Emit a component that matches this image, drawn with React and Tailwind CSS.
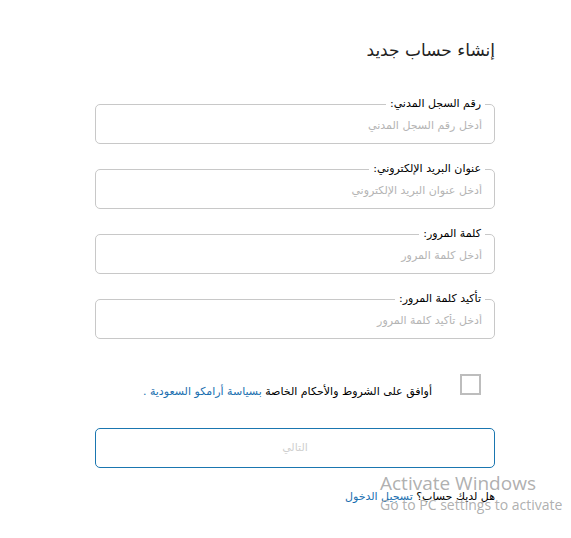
import React from "react";

const fields = [
  { label: "رقم السجل المدني:", placeholder: "أدخل رقم السجل المدني", type: "text" },
  { label: "عنوان البريد الإلكتروني:", placeholder: "أدخل عنوان البريد الإلكتروني", type: "email" },
  { label: "كلمة المرور:", placeholder: "أدخل كلمة المرور", type: "password" },
  { label: "تأكيد كلمة المرور:", placeholder: "أدخل تأكيد كلمة المرور", type: "password" },
];

const Field = ({ label, placeholder, type }) => (
  <fieldset className="rounded-[5px] border border-[#c8c8c8] pr-[9px] pl-3 pb-[7px]">
    <legend className="px-[4px] text-[11px] leading-[14px] text-black">{label}</legend>
    <input
      type={type}
      placeholder={placeholder}
      className="mt-[3px] h-[22px] w-full bg-transparent pr-[3px] text-[11px] text-black outline-none placeholder:text-[#b4b4b4]"
    />
  </fieldset>
);

const App = () => {
  return (
    <div
      dir="rtl"
      className="relative min-h-[538px] w-[571px] bg-white pt-[38px]"
      style={{ fontFamily: "'DejaVu Sans', 'Liberation Sans', sans-serif" }}
    >
      <div className="mr-[76px] w-[400px]">
        {/* Title */}
        <h1 className="text-[17px] leading-[24px] text-[#222]">إنشاء حساب جديد</h1>

        {/* Inputs */}
        <form className="mt-[35px] flex flex-col gap-[18px]">
          {fields.map((f) => (
            <Field key={f.label} {...f} />
          ))}
        </form>

        {/* Terms */}
        <div className="mt-[35px] flex items-end gap-[28px] pr-[14px]">
          <span className="h-[21px] w-[21px] shrink-0 border-2 border-[#bdbdbd] bg-white" />
          <p className="mb-[-4px] text-[11px] leading-[14px] text-black">
            أوافق على الشروط والأحكام الخاصة{" "}
            <a className="text-[#1a6fb0]">بسياسة أرامكو السعودية .</a>
          </p>
        </div>

        {/* Next button */}
        <button className="mt-[33px] flex h-[40px] w-full items-center justify-center rounded-[5px] border-[1.5px] border-[#1a76b0] bg-white text-[11px] text-[#cfcfcf]">
          التالي
        </button>

        {/* Login link */}
        <p className="mt-[22px] text-[11px] leading-[14px] text-black">
          هل لديك حساب؟ <a className="text-[#1a6fb0]">تسجيل الدخول</a>
        </p>
      </div>

      {/* Windows watermark */}
      <div
        dir="ltr"
        className="pointer-events-none absolute left-[380px] top-[472px] text-[#a6a6a6]/90"
        style={{ fontFamily: "'Open Sans', 'Noto Sans', sans-serif" }}
      >
        <p className="text-[19px] leading-[22px]">Activate Windows</p>
        <p className="mt-[3px] text-[14px] leading-[16px]">Go to PC settings to activate</p>
      </div>
    </div>
  );
};

export default App;
